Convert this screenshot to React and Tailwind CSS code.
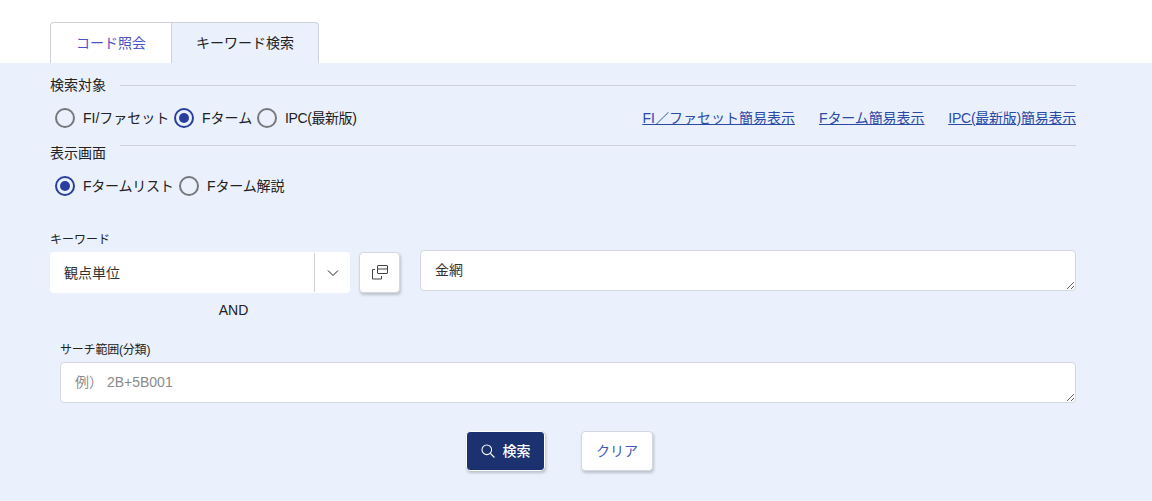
import React, { useState } from 'react';

const FONT = 'font-["Liberation_Sans","Noto_Sans_CJK_JP",sans-serif]';

function Radio({ label, checked, onChange, gap = 'w-[99px]', tight = '' }) {
  return (
    <label className={`flex items-center h-5 ${gap}`} onClick={onChange}>
      <span className={`flex items-center justify-center shrink-0 w-5 h-5 rounded-full border-2 bg-[#eaf1fc] ${checked ? 'border-[#2a3f9d]' : 'border-[#77787c]'}`}>
        {checked && <span className="w-[10px] h-[10px] rounded-full bg-[#2a3f9d]" />}
      </span>
      <span className={`ml-2 text-[14px] leading-5 text-[#222] whitespace-nowrap ${tight}`}>{label}</span>
    </label>
  );
}

function Heading({ children, lineClass }) {
  return (
    <div className="relative h-5 text-[14px] leading-5 text-[#222]">
      {children}
      <span className={`absolute left-[70px] right-0 h-px bg-[#cfd2d8] ${lineClass}`} />
    </div>
  );
}

export default function App() {
  const [target, setTarget] = useState('f');
  const [view, setView] = useState('list');

  return (
    <div className={`${FONT} w-[1152px] h-[501px] bg-white overflow-hidden`}>
      <div className="flex h-[63px] pt-[22px] pl-[50px] text-[14px]">
        <button type="button" className="w-[122px] rounded-tl-[4px] border border-b-0 border-[#cfd2d8] bg-white text-[#4a52c4]">コード照会</button>
        <button type="button" className="w-[148px] -ml-px rounded-tr-[4px] border border-b-0 border-[#cfd2d8] bg-[#eaf1fc] text-[#222]">キーワード検索</button>
      </div>

      <div className="h-[438px] bg-[#eaf1fc] pl-[50px] pr-[76px] pt-[12px]">
        <Heading lineClass="top-[10px]">検索対象</Heading>

        <div className="flex items-center justify-between mt-[13px] pl-[5px]">
          <div className="flex items-center">
            <Radio label="FI/ファセット" gap="w-[119px]" checked={target === 'fi'} onChange={() => setTarget('fi')} />
            <Radio label="Fターム" gap="w-[83px]" checked={target === 'f'} onChange={() => setTarget('f')} />
            <Radio label="IPC(最新版)" tight="tracking-[-0.4px]" checked={target === 'ipc'} onChange={() => setTarget('ipc')} />
          </div>
          <div className="flex gap-6 text-[14px] leading-5 text-[#2a4aa8] underline">
            <a href="#fi">FI／ファセット簡易表示</a>
            <a href="#f" className="tracking-[-0.1px]">Fターム簡易表示</a>
            <a href="#ipc" className="tracking-[-0.25px]">IPC(最新版)簡易表示</a>
          </div>
        </div>

        <div className="mt-[15px]">
          <Heading lineClass="top-[2px]">表示画面</Heading>
        </div>

        <div className="flex items-center mt-[13px] pl-[5px]">
          <Radio label="Fタームリスト" gap="w-[124px]" tight="tracking-[-0.25px]" checked={view === 'list'} onChange={() => setView('list')} />
          <Radio label="Fターム解説" tight="tracking-[-0.15px]" checked={view === 'desc'} onChange={() => setView('desc')} />
        </div>

        <div className="mt-[36px] text-[12px] leading-4 text-[#222]">キーワード</div>

        <div className="flex items-start mt-[2px]">
          <div className="w-[300px] mt-[2px]">
            <div className="flex items-center h-[41px] rounded-[4px] bg-white">
              <span className="flex-1 pl-[14px] pt-[2px] text-[14px] text-[#333]">観点単位</span>
              <span className="flex items-center justify-center w-[36px] h-[39px] border-l border-[#cfd2d8]">
                <svg width="12" height="12" viewBox="0 0 12 12" fill="none" stroke="#222" strokeWidth="1">
                  <path d="M1 3.500l5 5 5-5" />
                </svg>
              </span>
            </div>
            <div className="mt-[7px] text-center text-[14px] leading-5 text-[#222] pl-[67px]">AND</div>
          </div>
          <button type="button" className="flex items-center justify-center w-[41px] h-[41px] mt-[2px] ml-[9px] rounded-[4px] border border-[#d5d8de] bg-white shadow-[1px_2px_3px_rgba(0,0,0,0.2)]">
            <svg width="18" height="17" viewBox="0 0 18 17" fill="none" stroke="#444" strokeWidth="1">
              <rect x="6.500" y="1.500" width="10" height="8" rx="0.5" />
              <path d="M6.500 5h10" />
              <path d="M4 5.500H1.500v9.500h9v-3" />
            </svg>
          </button>
          <textarea
            defaultValue="金網"
            className="flex-1 h-[41px] ml-[20px] px-[14px] py-[9px] rounded-[4px] border border-[#d5d8de] bg-white text-[14px] leading-5 text-[#333] outline-none"
          />
        </div>

        <div className="pl-[10px] mt-[22px]">
          <div className="text-[12px] leading-4 text-[#222] tracking-[-0.2px]">サーチ範囲(分類)</div>
          <textarea
            placeholder="例） 2B+5B001"
            className="block w-full h-[41px] mt-[4px] px-[14px] py-[9px] rounded-[4px] border border-[#d5d8de] bg-white text-[14px] leading-5 text-[#333] placeholder:text-[#8a8a8a] outline-none"
          />
        </div>

        <div className="flex mt-[28px] pl-[416px]">
          <button type="button" className="flex items-center justify-center gap-[8px] w-[79px] h-[40px] rounded-[4px] border border-white bg-[#1b3170] text-[14px] font-medium text-white shadow-[1px_2px_3px_rgba(0,0,0,0.2)]">
            <svg width="14" height="14" viewBox="0 0 14 14" fill="none" stroke="#fff" strokeWidth="1.1">
              <circle cx="5.800" cy="5.800" r="4.800" />
              <path d="M9.300 9.300L13.500 13.500" />
            </svg>
            検索
          </button>
          <button type="button" className="w-[72px] h-[40px] ml-[36px] rounded-[4px] border border-[#d5d8de] bg-white text-[14px] text-[#3f5ab5] shadow-[1px_2px_3px_rgba(0,0,0,0.2)]">クリア</button>
        </div>
      </div>
    </div>
  );
}
